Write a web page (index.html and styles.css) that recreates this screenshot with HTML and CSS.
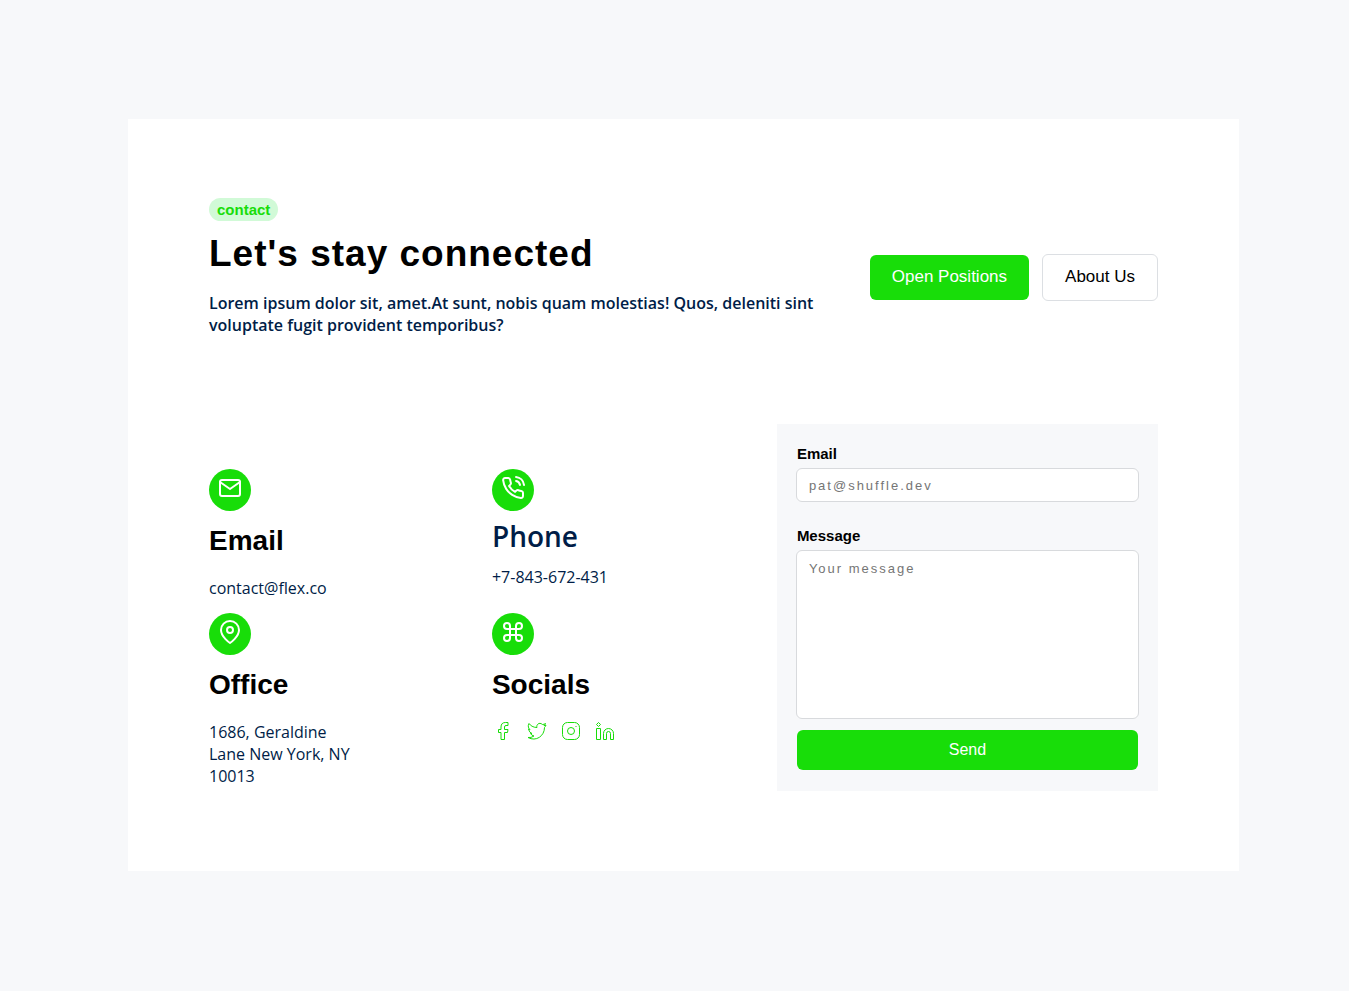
FILE: index.html
```html
<!DOCTYPE html>
<html lang="en">
<head>
    <meta charset="UTF-8">
    <meta name="viewport" content="width=device-width, initial-scale=1.0">
    <title>Contact</title>
    <link rel="stylesheet" href="styles.css">
</head>
<body>
    <main class="container">
        <header class="top">
            <div class="intro">
                <span class="badge">contact</span>
                <h1>Let's stay connected</h1>
                <p>Lorem ipsum dolor sit, amet.At sunt, nobis quam molestias! Quos, deleniti sint voluptate fugit provident temporibus?</p>
            </div>
            <div class="buttons">
                <button type="button" class="btn btn-green">Open Positions</button>
                <button type="button" class="btn btn-white">About Us</button>
            </div>
        </header>

        <section class="bottom">
            <div class="info">
                <div class="item">
                    <div class="circle">
                        <svg viewBox="0 0 24 24"><rect x="2" y="4" width="20" height="16" rx="2"/><path d="M2 6l10 7 10-7"/></svg>
                    </div>
                    <h2>Email</h2>
                    <p>contact@flex.co</p>
                </div>
                <div class="item">
                    <div class="circle">
                        <svg viewBox="0 0 24 24"><path d="M15.05 5A5 5 0 0 1 19 8.95M15.05 1A9 9 0 0 1 23 8.94M22 16.92v3a2 2 0 0 1-2.18 2 19.79 19.79 0 0 1-8.63-3.07 19.5 19.5 0 0 1-6-6A19.79 19.79 0 0 1 2.12 4.18 2 2 0 0 1 4.11 2h3a2 2 0 0 1 2 1.72c.13.96.36 1.9.7 2.81a2 2 0 0 1-.45 2.11L8.09 9.91a16 16 0 0 0 6 6l1.27-1.27a2 2 0 0 1 2.11-.45c.91.34 1.85.57 2.81.7A2 2 0 0 1 22 16.92z"/></svg>
                    </div>
                    <h2 class="phone">Phone</h2>
                    <p>+7-843-672-431</p>
                </div>
                <div class="item">
                    <div class="circle">
                        <svg viewBox="0 0 24 24"><path d="M21 10c0 7-9 13-9 13s-9-6-9-13a9 9 0 0 1 18 0z"/><circle cx="12" cy="10" r="3"/></svg>
                    </div>
                    <h2>Office</h2>
                    <p>1686, Geraldine Lane New York, NY 10013</p>
                </div>
                <div class="item">
                    <div class="circle">
                        <svg viewBox="0 0 24 24"><path d="M18 3a3 3 0 0 0-3 3v12a3 3 0 1 0 3-3H6a3 3 0 1 0 3 3V6a3 3 0 1 0-3 3h12a3 3 0 0 0 0-6z"/></svg>
                    </div>
                    <h2>Socials</h2>
                    <div class="socials">
                        <a href="#" aria-label="Facebook"><svg viewBox="0 0 20 20"><path d="M8 18.500V11.500H5.500V8.500H8V6Q8 1.500 12.500 1.500H15V4.500H13Q11.500 4.500 11.500 6V8.500H15L14.500 11.500H11.500V18.500Z"/></svg></a>
                        <a href="#" aria-label="Twitter"><svg viewBox="0 0 20 20"><path d="M19 4Q18 4.500 17 4.500 18 3.500 18.500 2.500 17 3.500 15.500 3.500C12 .5 9 4 10 6.500 6 6.500 3.500 4.500 2 2.500 .5 5 1.500 7.500 3 8.500L1.500 8Q2 11.500 5 12.500H3.500Q4.500 14.500 7 15 4 17 1 16.500C9 21 17.500 15 17.500 6.500Q18.500 5.500 19 4Z"/></svg></a>
                        <a href="#" aria-label="Instagram"><svg viewBox="0 0 20 20"><rect x="1.500" y="1.500" width="17" height="17" rx="5"/><circle cx="10" cy="10" r="3.500"/><path d="M14.500 5.500h1"/></svg></a>
                        <a href="#" aria-label="LinkedIn"><svg viewBox="0 0 20 20"><path d="M1.500 7.500h4v11h-4zM8.500 18.500v-6a5 5 0 0 1 10 0v6h-3v-6a2 2 0 0 0-4 0v6z"/><path d="M3.500 1.500l2 2-2 2-2-2z"/></svg></a>
                    </div>
                </div>
            </div>

            <form class="form">
                <label for="email">Email</label>
                <input type="email" id="email" placeholder="pat@shuffle.dev">
                <label for="message">Message</label>
                <textarea id="message" placeholder="Your message"></textarea>
                <button type="submit" class="send">Send</button>
            </form>
        </section>
    </main>
</body>
</html>
```
FILE: styles.css
```css
* {
    box-sizing: border-box;
    margin: 0;
    padding: 0;
}

body {
    background-color: #f7f8fa;
    color: #001d47;
    font-family: 'Trebuchet MS', 'Open Sans', sans-serif;
    font-size: 16px;
    line-height: 22px;
    padding: 119px 110px 120px 128px;
}

.container {
    background-color: #fff;
    padding: 79px 81px 80px;
}

h1, h2, label, .badge {
    color: #000;
    font-family: 'Franklin Gothic Medium', 'Liberation Sans', sans-serif;
    font-weight: bold;
}

/* header */
.top {
    display: flex;
    justify-content: space-between;
    align-items: center;
    margin-bottom: 88px;
}

.intro {
    flex: 0 1 620px;
}

.badge {
    display: inline-block;
    background-color: #d1fad7;
    color: #18dd09;
    border-radius: 12px;
    padding: 0 8px;
    line-height: 23px;
    font-size: 15px;
}

h1 {
    font-size: 37px;
    line-height: 44px;
    letter-spacing: 1px;
    margin: 11px 0 16px;
}

.intro p {
    font-weight: 600;
}

.buttons {
    display: flex;
    align-items: center;
    gap: 13px;
    padding-top: 20px;
}

.btn, .send {
    border: none;
    border-radius: 6px;
    cursor: pointer;
    font-family: Arial, 'Liberation Sans', sans-serif;
    white-space: nowrap;
}

.btn {
    height: 45px;
    padding: 0 22px;
    font-size: 17px;
}

.btn-green, .send {
    background-color: #18dd09;
    color: #fff;
}

.btn-white {
    height: 47px;
    background-color: #fff;
    border: 1px solid #dcdfe3;
    color: #000;
}

/* contact details */
.bottom {
    display: grid;
    grid-template-columns: 149fr 100fr;
}

.info {
    display: grid;
    grid-template-columns: 1fr 1fr;
    align-content: start;
    row-gap: 14px;
    padding: 45px 2px 0 0;
}

.circle {
    display: flex;
    justify-content: center;
    width: 42px;
    height: 42px;
    padding-top: 7px;
    border-radius: 50%;
    background-color: #18dd09;
}

.circle svg {
    width: 24px;
    height: 24px;
    fill: none;
    stroke: #fff;
    stroke-width: 2;
    stroke-linecap: round;
    stroke-linejoin: round;
}

h2 {
    font-size: 28px;
    line-height: 32px;
    margin: 14px 0 20px;
}

.phone {
    color: #001d47;
    font-family: 'Trebuchet MS', 'Open Sans', sans-serif;
    font-weight: 600;
    margin: 9px 0 14px;
}

.item p {
    max-width: 150px;
}

.socials {
    display: flex;
    gap: 14px;
    padding-left: 1px;
}

.socials svg {
    display: block;
    width: 20px;
    height: 20px;
    fill: none;
    stroke: #18dd09;
}

/* form */
.form {
    display: flex;
    flex-direction: column;
    background-color: #f7f8fa;
    padding: 19px 19px 21px;
}

label {
    font-size: 15px;
    line-height: 22px;
    padding-left: 1px;
}

input, textarea {
    width: 100%;
    border: 1px solid #d8dadd;
    border-radius: 6px;
    background-color: #fff;
    padding: 0 12px;
    font-family: Arial, 'Liberation Sans', sans-serif;
    font-size: 13px;
    letter-spacing: 2px;
}

input {
    height: 34px;
    margin: 3px 0 23px;
}

textarea {
    height: 169px;
    margin: 3px 0 11px;
    padding-top: 10px;
    resize: none;
}

::placeholder {
    color: #757575;
}

.send {
    height: 40px;
    margin: 0 1px;
    font-size: 16px;
}
```
